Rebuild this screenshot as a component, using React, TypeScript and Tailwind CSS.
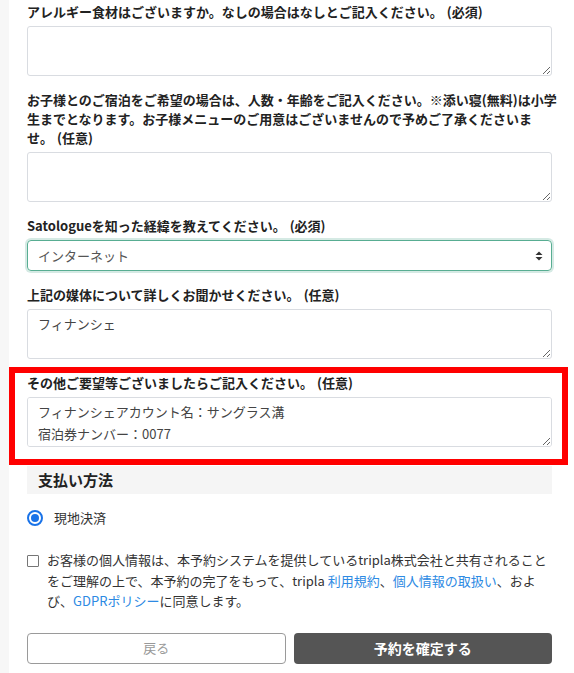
import React from 'react'

const font = { fontFamily: '"Noto Sans CJK JP", "Noto Sans", sans-serif' }

function Label({ children, note }: { children: React.ReactNode; note: string }) {
  return (
    <div className="mb-[5px] text-[13px] font-bold leading-[19px] text-[#222]">
      {children}
      <span className="ml-[4px]">{note}</span>
    </div>
  )
}

function Area({ value }: { value?: string }) {
  return (
    <textarea
      readOnly
      defaultValue={value}
      className="block h-[50px] w-full rounded-[3px] border border-[#d9dce1] bg-white px-[10px] py-[3px] text-[13px] leading-[22px] text-[#444] outline-none"
    />
  )
}

export default function App() {
  return (
    <div className="flex min-h-screen bg-white text-[#333]" style={font}>
      <div className="w-[9px] shrink-0 bg-[#f7f7f7]" />
      <div className="min-w-0 flex-1 pl-[18px] pr-[22px] pt-[2px]">
        <div className="flex flex-col gap-[14px]">
          {/* allergy */}
          <div>
            <Label note="(必須)">アレルギー食材はございますか。なしの場合はなしとご記入ください。</Label>
            <Area />
          </div>

          {/* children */}
          <div>
            <Label note="(任意)">
              <span className="whitespace-nowrap">お子様とのご宿泊をご希望の場合は、人数・年齢をご記入ください。※添い寝(無料)は小学</span>
              <br />
              <span className="whitespace-nowrap">生までとなります。お子様メニューのご用意はございませんので予めご了承くださいま</span>
              <br />
              せ。
            </Label>
            <Area />
          </div>

          {/* source select */}
          <div>
            <Label note="(必須)">Satologueを知った経緯を教えてください。</Label>
            <div className="flex h-[31px] items-center justify-between rounded-[4px] border border-[#58ad92] pl-[10px] pr-[8px] text-[13px] text-[#555] shadow-[0_0_0_2px_rgba(88,173,146,0.25)]">
              <span>インターネット</span>
              <svg width="8" height="10" viewBox="0 0 8 10">
                <path d="M4 0.5 L7.5 4 H0.5 Z" fill="#333" />
                <path d="M4 9.5 L7.5 6 H0.5 Z" fill="#333" />
              </svg>
            </div>
          </div>

          {/* media detail */}
          <div>
            <Label note="(任意)">上記の媒体について詳しくお聞かせください。</Label>
            <Area value="フィナンシェ" />
          </div>

          {/* other requests, highlighted */}
          <div className="-ml-[18px] -mr-[16px] -mt-[6px] border-[6px] border-[#ff0000] pb-[12px] pl-[12px] pr-[10px]">
            <Label note="(任意)">その他ご要望等ございましたらご記入ください。</Label>
            <Area value={'フィナンシェアカウント名：サングラス溝\n宿泊券ナンバー：0077'} />
          </div>
        </div>

        {/* payment */}
        <div className="mt-[1px] flex h-[28px] items-center bg-[#f5f5f5] pl-[11px] text-[15px] font-bold text-[#222]">支払い方法</div>

        <div className="mt-[14px] flex h-[20px] items-center">
          <span className="flex h-[16px] w-[16px] items-center justify-center rounded-full border-2 border-[#1a73e8]">
            <span className="h-[8px] w-[8px] rounded-full bg-[#1a73e8]" />
          </span>
          <span className="ml-[11px] text-[13px] text-[#333]">現地決済</span>
        </div>

        <div className="mt-[22px] flex items-start">
          <span className="mt-[5px] h-[12px] w-[12px] shrink-0 rounded-[1px] border border-[#767676] bg-white" />
          <div className="ml-[8px] text-[13px] leading-[20.5px] text-[#333]">
            <span className="whitespace-nowrap">お客様の個人情報は、本予約システムを提供しているtripla株式会社と共有されること</span>
            <br />
            をご理解の上で、本予約の完了をもって、tripla <span className="text-[#2d8ae3]">利用規約</span>、<span className="text-[#2d8ae3]">個人情報の取扱い</span>、およ
            <br />
            び、<span className="text-[#2d8ae3]">GDPRポリシー</span>に同意します。
          </div>
        </div>

        <div className="mt-[21px] grid grid-cols-2 gap-[8px] pb-[10px]">
          <button className="h-[31px] rounded-[4px] border border-[#9a9a9a] bg-white text-[13px] text-[#999]">戻る</button>
          <button className="h-[31px] rounded-[4px] bg-[#555] text-[14px] font-bold text-white">予約を確定する</button>
        </div>
      </div>
    </div>
  )
}
